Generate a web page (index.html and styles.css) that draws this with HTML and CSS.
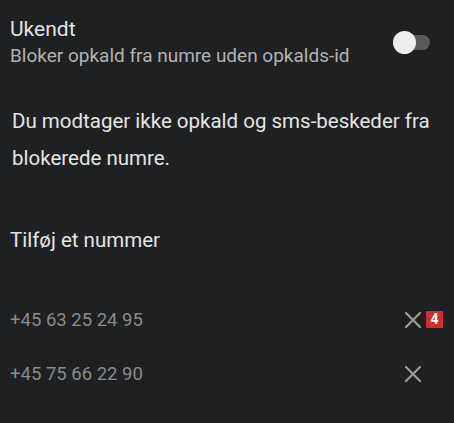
FILE: index.html
```html
<!DOCTYPE html>
<html lang="da">
<head>
    <meta charset="UTF-8">
    <meta name="viewport" content="width=device-width, initial-scale=1.0">
    <title>Blokerede numre</title>
    <link rel="stylesheet" href="styles.css">
</head>
<body>
    <div class="screen">
        <div class="setting">
            <div class="setting-text">
                <div class="setting-title">Ukendt</div>
                <div class="setting-sub">Bloker opkald fra numre uden opkalds-id</div>
            </div>
            <div class="toggle">
                <div class="toggle-thumb"></div>
            </div>
        </div>

        <p class="info">Du modtager ikke opkald og sms-beskeder fra blokerede numre.</p>

        <div class="add">Tilføj et nummer</div>

        <ul class="numbers">
            <li class="number-row">
                <span class="number">+45 63 25 24 95</span>
                <span class="remove">
                    <svg width="18" height="18" viewBox="0 0 18 18"><path d="M2 2L16 16M16 2L2 16" stroke="currentColor" stroke-width="2.2" stroke-linecap="round"/></svg>
                    <span class="badge">4</span>
                </span>
            </li>
            <li class="number-row">
                <span class="number">+45 75 66 22 90</span>
                <span class="remove">
                    <svg width="18" height="18" viewBox="0 0 18 18"><path d="M2 2L16 16M16 2L2 16" stroke="currentColor" stroke-width="2.2" stroke-linecap="round"/></svg>
                </span>
            </li>
        </ul>
    </div>
</body>
</html>
```

FILE: styles.css
```css
body {
    margin: 0;
    background-color: #1f2022;
    font-family: Roboto, "Noto Sans", sans-serif;
    color: #e4e4e4;
}
.screen {
    width: 454px;
    height: 423px;
    padding: 15px 0 0 10px;
    box-sizing: border-box;
}
.setting {
    display: flex;
    justify-content: space-between;
    align-items: center;
}
.setting-title {
    font-size: 21px;
    line-height: 28px;
    color: #e2e2e2;
}
.setting-sub {
    font-size: 19px;
    line-height: 26px;
    color: #b2b2b2;
}
.toggle {
    position: relative;
    width: 37px;
    height: 15px;
    margin-right: 24px;
    border-radius: 8px;
    background: #5a5a5c;
}
.toggle-thumb {
    position: absolute;
    left: 0;
    top: -4px;
    width: 23px;
    height: 23px;
    border-radius: 50%;
    background: #ededed;
}
.info {
    margin: 34px 0 0 2px;
    font-size: 20.5px;
    line-height: 37px;
    color: #e4e4e4;
}
.add {
    margin-top: 49px;
    font-size: 20.5px;
    line-height: 28px;
    color: #e4e4e4;
}
.numbers {
    list-style: none;
    margin: 39px 0 0 0;
    padding: 0;
}
.number-row {
    display: flex;
    justify-content: space-between;
    align-items: center;
    height: 54px;
    padding-right: 32px;
}
.number {
    font-size: 18.5px;
    color: #8a8a8a;
}
.remove {
    position: relative;
    display: flex;
    align-items: center;
    color: #9a9a9a;
}
.badge {
    position: absolute;
    left: 22px;
    top: 0;
    width: 17px;
    height: 17px;
    background: #d42a30;
    color: #fff;
    font-size: 14px;
    font-weight: bold;
    text-align: center;
    line-height: 17px;
}
```
